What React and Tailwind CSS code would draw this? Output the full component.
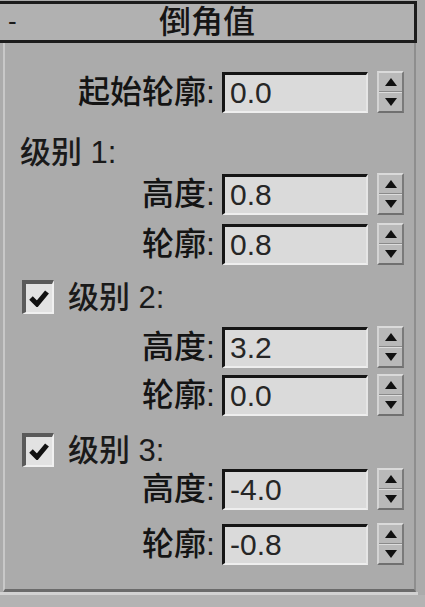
import React from "react";

const font = { fontFamily: '"Liberation Sans", "Noto Sans CJK SC", sans-serif' };

function Spinner() {
  return (
    <div className="ml-[9px] w-[27px] h-[42px] flex flex-col bg-[#b9b9b9] border-t-2 border-l-2 border-t-[#dadada] border-l-[#d4d4d4] border-b-2 border-r-2 border-b-[#707070] border-r-[#7a7a7a]">
      <div className="flex-1 flex items-center justify-center border-b border-b-[#8a8a8a]">
        <svg width="12" height="8" viewBox="0 0 12 8"><polygon points="6,0 12,8 0,8" fill="#111" /></svg>
      </div>
      <div className="flex-1 flex items-center justify-center border-t border-t-[#dcdcdc]">
        <svg width="12" height="8" viewBox="0 0 12 8"><polygon points="0,0 12,0 6,8" fill="#111" /></svg>
      </div>
    </div>
  );
}

function Row({ label, value, mt }) {
  return (
    <div className={`flex items-center h-[40px] ${mt}`}>
      <div className="w-[210px] text-right text-[32px] font-medium leading-none text-[#141414] whitespace-nowrap">{label}</div>
      <div className="ml-[7px] w-[146px] h-[41px] bg-[#dadada] border-t-[3px] border-l-[3px] border-t-[#151515] border-l-[#151515] border-b-2 border-r-2 border-b-[#eeeeee] border-r-[#e6e6e6] flex items-center pl-[5px] text-[30px] leading-none text-[#262626]">
        {value}
      </div>
      <Spinner />
    </div>
  );
}

function Check({ label, mt }) {
  return (
    <div className={`flex items-center h-[34px] ${mt}`}>
      <div className="ml-[17px] w-[32px] h-[34px] bg-[#e2e2e2] border-t-[4px] border-l-[4px] border-t-[#5a5a5a] border-l-[#5a5a5a] border-b-2 border-r-2 border-b-[#f0f0f0] border-r-[#f0f0f0] flex items-center justify-center">
        <svg width="20" height="18" viewBox="0 0 20 18">
          <path d="M2 9 L8 15 L18 3" stroke="#111" strokeWidth="5" fill="none" />
        </svg>
      </div>
      <div className="ml-[14px] text-[31px] font-medium leading-none text-[#1a1a1a] whitespace-nowrap">{label}</div>
    </div>
  );
}

export default function App() {
  return (
    <div className="w-[425px] h-[607px] bg-[#ababab] overflow-hidden flex flex-col" style={font}>
      <div className="mt-[1px] w-[417px] h-[42px] bg-[#b1b1b1] border-t-[3px] border-b-[3px] border-r-[3px] border-[#1c1c1c] flex items-center relative">
        <div className="absolute left-[8px] top-[4px] text-[26px] leading-none text-[#1a1a1a]">-</div>
        <div className="w-full text-center text-[32px] font-medium leading-none text-[#151515]">倒角值</div>
      </div>
      <div className="flex">
        <div className="w-[413px] h-[549px] ml-[3px] border-l-2 border-l-[#c8c8c8] border-r-2 border-r-[#8e8e8e] border-b-[3px] border-b-[#6b6b6b] flex flex-col">
          <Row label="起始轮廓:" value="0.0" mt="mt-[29px]" />
          <div className="mt-[23px] h-[34px] flex items-center pl-[15px] text-[31px] font-medium leading-none text-[#1a1a1a]">级别 1:</div>
          <Row label="高度:" value="0.8" mt="mt-[5px]" />
          <Row label="轮廓:" value="0.8" mt="mt-[10px]" />
          <Check label="级别 2:" mt="mt-[16px]" />
          <Row label="高度:" value="3.2" mt="mt-[13px]" />
          <Row label="轮廓:" value="0.0" mt="mt-[8px]" />
          <Check label="级别 3:" mt="mt-[18px]" />
          <Row label="高度:" value="-4.0" mt="mt-[2px]" />
          <Row label="轮廓:" value="-0.8" mt="mt-[15px]" />
        </div>
      </div>
      <div className="h-[3px] w-[418px] bg-[#d2d2d2]" />
      <div className="flex-1 bg-[#b3b3b3]" />
    </div>
  );
}
